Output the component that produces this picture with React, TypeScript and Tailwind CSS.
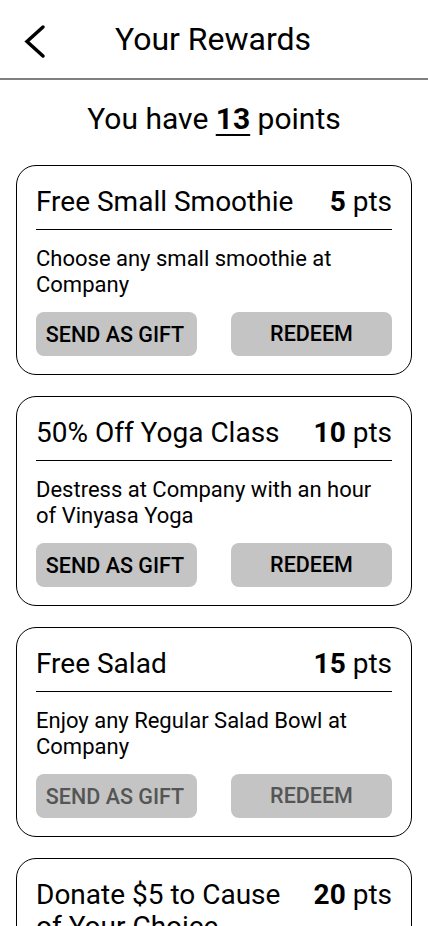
import React from "react";

type Reward = {
  id: number;
  title: string;
  points: number;
  description: string;
  enabled: boolean;
};

const rewards: Reward[] = [
  { id: 1, title: "Free Small Smoothie", points: 5, description: "Choose any small smoothie at Company", enabled: true },
  { id: 2, title: "50% Off Yoga Class", points: 10, description: "Destress at Company with an hour of Vinyasa Yoga", enabled: true },
  { id: 3, title: "Free Salad", points: 15, description: "Enjoy any Regular Salad Bowl at Company", enabled: false },
  { id: 4, title: "Donate $5 to Cause of Your Choice", points: 20, description: "Give back to a cause that matters to you", enabled: false },
];

const RewardCard: React.FC<{ reward: Reward }> = ({ reward }) => {
  const textColor = reward.enabled ? "text-black" : "text-[#555555]";
  return (
    <div className="border border-black rounded-[20px] px-[19px] pt-5 pb-[18px]">
      <div className="flex items-start justify-between gap-4 border-b border-black pb-[11px]">
        <h2 className="text-[28px] leading-[32px] text-black">{reward.title}</h2>
        <span className="text-[28px] leading-[32px] text-black shrink-0">
          <span className="font-bold">{reward.points}</span> pts
        </span>
      </div>
      <p className="mt-4 text-[22px] leading-[26px] text-black">{reward.description}</p>
      <div className="mt-[14px] flex justify-between">
        <button
          className={`w-[161px] h-[44px] rounded-[8px] bg-[#c4c4c4] text-[21.5px] font-medium pt-[3px] pr-[3px] ${textColor}`}
        >
          SEND AS GIFT
        </button>
        <button
          className={`w-[161px] h-[44px] rounded-[8px] bg-[#c4c4c4] text-[21.5px] font-medium ${textColor}`}
        >
          REDEEM
        </button>
      </div>
    </div>
  );
};

export default function App() {
  return (
    <div className="min-h-screen bg-white font-['Roboto',sans-serif] text-black">
      <header className="relative flex items-center justify-center h-[80px] border-b-2 border-[#808080]">
        <button className="absolute left-[22px] top-[24px]">
          <svg width="26" height="36" viewBox="0 0 26 36" fill="none">
            <path d="M21 3 L5 17.5 L21 32" stroke="black" strokeWidth="3.5" strokeLinecap="round" strokeLinejoin="miter" />
          </svg>
        </button>
        <h1 className="text-[32px] leading-[32px] pr-[2px]">Your Rewards</h1>
      </header>
      <p className="text-center text-[30px] leading-[36px] mt-[21px]">
        You have <span className="font-bold underline underline-offset-[5px] decoration-[1.5px]">13</span> points
      </p>
      <div className="px-4 mt-[28px] flex flex-col gap-[21px] pb-6">
        {rewards.map((r) => (
          <RewardCard key={r.id} reward={r} />
        ))}
      </div>
    </div>
  );
}
